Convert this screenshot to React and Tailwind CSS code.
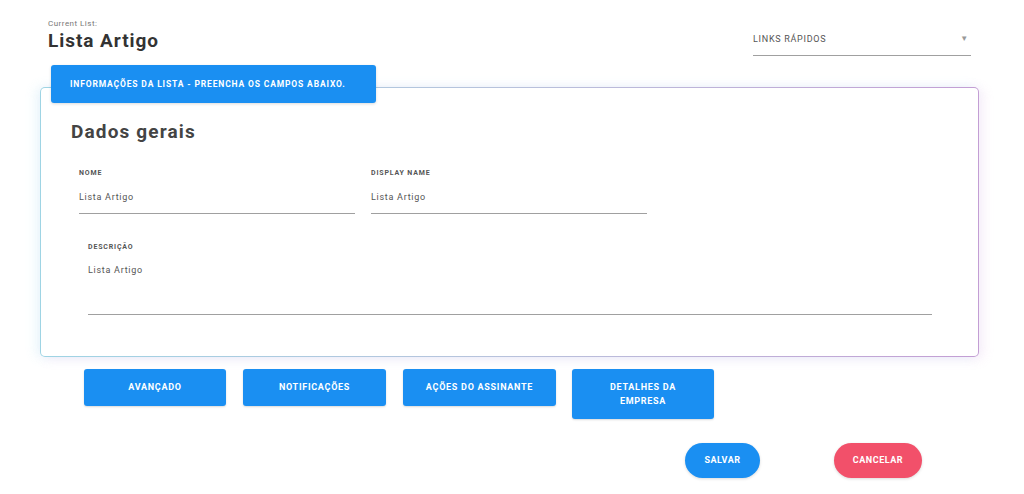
import React from 'react';

const font = { fontFamily: 'Roboto, "Liberation Sans", sans-serif' };

function Field({ label, value, className }) {
  return (
    <div className={className}>
      <div className="text-[7px] font-bold tracking-[0.12em] text-[#555] leading-[9px]">{label}</div>
      <div className="mt-[14px] text-[9px] text-[#555] tracking-[0.08em] leading-[11px]">{value}</div>
      <div className="mt-[10px] h-px bg-[#a0a0a0]" />
    </div>
  );
}

export default function App() {
  const tabs = [
    { label: 'AVANÇADO', w: 'w-[142px]' },
    { label: 'NOTIFICAÇÕES', w: 'w-[143px]' },
    { label: 'AÇÕES DO ASSINANTE', w: 'w-[153px]' },
  ];

  return (
    <div className="w-full h-[494px] bg-white text-[#333] overflow-hidden" style={font}>
      {/* header */}
      <div className="h-[65px] flex justify-between pl-[48px] pr-[53px] pt-[19px]">
        <div>
          <div className="text-[8px] text-[#777] tracking-[0.06em] leading-[10px]">Current List:</div>
          <div className="text-[19px] font-bold text-[#333] leading-[24px] tracking-[0.05em]">Lista Artigo</div>
        </div>
        <div className="w-[218px] pt-[14px]">
          <div className="flex justify-between items-center text-[9px] tracking-[0.08em] text-[#555] leading-[12px]">
            <span>LINKS RÁPIDOS</span>
            <span className="text-[8px] text-[#999] pr-[2px]">▼</span>
          </div>
          <div className="mt-[10px] h-px bg-[#a0a0a0]" />
        </div>
      </div>

      {/* card */}
      <div className="mt-[22px] ml-[40px] mr-[45px] p-px rounded-[5px] bg-gradient-to-r from-[#9ed4e4] via-[#b8c2dc] to-[#c39ed4] shadow-[-4px_0_12px_rgba(120,210,235,0.16),4px_2px_12px_rgba(220,140,220,0.16)]">
        <div className="flow-root bg-white rounded-[4px] h-[268px]">
          <div className="-mt-[23px] ml-[10px] w-[325px] h-[38px] bg-[#1a8ff2] rounded-[3px] shadow-[0_1px_3px_rgba(0,0,0,0.15)] flex items-center pl-[19px] text-[8.5px] font-bold text-white tracking-[0.1em]">
            INFORMAÇÕES DA LISTA - PREENCHA OS CAMPOS ABAIXO.
          </div>
          <div className="mt-[17px] pl-[30px] text-[19px] font-bold text-[#444] leading-[24px] tracking-[0.06em]">Dados gerais</div>
          <div className="mt-[25px] pl-[38px] flex gap-[16px]">
            <Field label="NOME" value="Lista Artigo" className="w-[276px]" />
            <Field label="DISPLAY NAME" value="Lista Artigo" className="w-[276px]" />
          </div>
          <div className="mt-[29px] pl-[47px]">
            <div className="w-[844px]">
              <div className="text-[7px] font-bold tracking-[0.12em] text-[#555] leading-[9px]">DESCRIÇÃO</div>
              <div className="mt-[13px] text-[9px] text-[#555] tracking-[0.08em] leading-[11px]">Lista Artigo</div>
              <div className="mt-[38px] h-px bg-[#a0a0a0]" />
            </div>
          </div>
        </div>
      </div>

      {/* tab buttons */}
      <div className="mt-[12px] ml-[84px] flex items-start gap-[17px]">
        {tabs.map((t) => (
          <div
            key={t.label}
            className={`${t.w} h-[37px] bg-[#1a8ff2] rounded-[3px] shadow-[0_1px_2px_rgba(0,0,0,0.15)] flex items-center justify-center text-[9px] font-bold text-white tracking-[0.08em]`}
          >
            {t.label}
          </div>
        ))}
        <div className="w-[142px] h-[50px] -ml-px bg-[#1a8ff2] rounded-[3px] shadow-[0_1px_2px_rgba(0,0,0,0.15)] flex items-center justify-center text-center text-[9px] font-bold text-white tracking-[0.08em] leading-[14px]">
          DETALHES DA<br />EMPRESA
        </div>
      </div>

      {/* actions */}
      <div className="mt-[24px] ml-[685px] flex gap-[74px]">
        <div className="w-[75px] h-[35px] rounded-full bg-[#1a8ff2] shadow-[0_1px_3px_rgba(0,0,0,0.15)] flex items-center justify-center text-[9px] font-bold text-white tracking-[0.06em]">
          SALVAR
        </div>
        <div className="w-[88px] h-[35px] rounded-full bg-[#f2506a] shadow-[0_1px_3px_rgba(0,0,0,0.15)] flex items-center justify-center text-[9px] font-bold text-white tracking-[0.06em]">
          CANCELAR
        </div>
      </div>
    </div>
  );
}
